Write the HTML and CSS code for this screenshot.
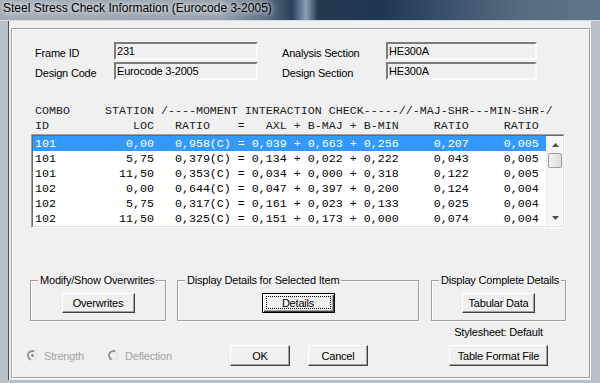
FILE: index.html
```html
<!DOCTYPE html>
<html lang="en">
<head>
    <meta charset="UTF-8">
    <title>Steel Stress Check Information (Eurocode 3-2005)</title>
    <link rel="stylesheet" href="styles.css">
</head>
<body>
    <div class="titlebar">Steel Stress Check Information (Eurocode 3-2005)</div>
    <div class="client">
        <div class="panel">
            <div class="fields">
                <div class="field-label">Frame ID</div>
                <div class="textbox short">231</div>
                <div class="field-label">Analysis Section</div>
                <div class="textbox">HE300A</div>

                <div class="field-label">Design Code</div>
                <div class="textbox short">Eurocode 3-2005</div>
                <div class="field-label">Design Section</div>
                <div class="textbox">HE300A</div>
            </div>

            <!-- column headers, same char grid as the list rows -->
            <div class="grid-head">COMBO     STATION /----MOMENT INTERACTION CHECK-----//-MAJ-SHR---MIN-SHR-/
ID            LOC   RATIO    =   AXL + B-MAJ + B-MIN     RATIO     RATIO</div>

            <div class="list">
                <div class="list-inner">
                    <div class="rows">
                        <div class="row selected">101          0,00   0,958(C) = 0,039 + 0,663 + 0,256     0,207     0,005</div>
                        <div class="row">101          5,75   0,379(C) = 0,134 + 0,022 + 0,222     0,043     0,005</div>
                        <div class="row">101         11,50   0,353(C) = 0,034 + 0,000 + 0,318     0,122     0,005</div>
                        <div class="row">102          0,00   0,644(C) = 0,047 + 0,397 + 0,200     0,124     0,004</div>
                        <div class="row">102          5,75   0,317(C) = 0,161 + 0,023 + 0,133     0,025     0,004</div>
                        <div class="row">102         11,50   0,325(C) = 0,151 + 0,173 + 0,000     0,074     0,004</div>
                    </div>
                    <div class="scrollbar">
                        <div class="sb-arrow">
                            <svg width="7" height="4" viewBox="0 0 7 4"><polygon points="0,4 7,4 3.5,0" fill="#505050"/></svg>
                        </div>
                        <div class="sb-thumb"></div>
                        <div class="sb-track"></div>
                        <div class="sb-arrow">
                            <svg width="7" height="4" viewBox="0 0 7 4"><polygon points="0,0 7,0 3.5,4" fill="#505050"/></svg>
                        </div>
                    </div>
                </div>
            </div>

            <div class="bottom">
                <div class="left-col">
                    <div class="groups">
                        <fieldset class="group g1">
                            <legend>Modify/Show Overwrites</legend>
                            <div class="group-body">
                                <button class="btn btn-small">Overwrites</button>
                            </div>
                        </fieldset>
                        <fieldset class="group g2">
                            <legend>Display Details for Selected Item</legend>
                            <div class="group-body">
                                <button class="btn btn-small btn-default"><span class="focus">Details</span></button>
                            </div>
                        </fieldset>
                    </div>
                    <div class="actions">
                        <div class="radios">
                            <div class="radio"><span class="radio-dot checked"></span>Strength</div>
                            <div class="radio"><span class="radio-dot"></span>Deflection</div>
                        </div>
                        <button class="btn btn-dialog">OK</button>
                        <button class="btn btn-dialog">Cancel</button>
                    </div>
                </div>
                <div class="right-col">
                    <fieldset class="group g3">
                        <legend>Display Complete Details</legend>
                        <div class="group-body">
                            <button class="btn btn-small">Tabular Data</button>
                        </div>
                    </fieldset>
                    <div class="stylesheet">Stylesheet: Default</div>
                    <button class="btn btn-wide">Table Format File</button>
                </div>
            </div>
        </div>
    </div>
</body>
</html>
```
FILE: styles.css
```css
* {
    box-sizing: border-box;
}
body {
    margin: 0;
    width: 600px;
    height: 383px;
    overflow: hidden;
    background-color: #b9bfc5;
    font-family: "Liberation Sans", Arial, sans-serif;
    font-size: 11px;
    letter-spacing: -0.2px;
    color: #000;
}

/* window chrome */
.titlebar {
    height: 21px;
    padding-left: 3px;
    line-height: 17px;
    font-size: 12px;
    letter-spacing: 0;
    color: #000;
    white-space: nowrap;
    text-shadow: 0 0 5px #fff, 0 0 9px rgba(255, 255, 255, 0.8);
    background: linear-gradient(90deg, #a3acb5 0, #97a2ad 220px, #5c6f83 265px, #2a415b 292px, #8aa0b5 306px, #22394f 318px, #1f3650 380px, #3c536c 450px, #566b80 520px, #60748a 600px);
    border-bottom: 1px solid #d9dde1;
}
.client {
    margin-left: 8px;
    width: 583px;
    height: 359px;
    border-left: 1px solid #4b4f54;
    background-color: #f0f0f0;
    padding: 7px 0 0 2px;
}
.panel {
    width: 580px;
    height: 351px;
    border: 1px solid;
    border-color: #a0a0a0 #fff #fff #a0a0a0;
    box-shadow: inset 1px 1px #fff, inset -1px -1px #a0a0a0;
}

/* frame info */
.fields {
    display: grid;
    grid-template-columns: 79px 168px 104px 151px;
    grid-auto-rows: 18px;
    row-gap: 2px;
    margin: 13px 0 0 23px;
}
.field-label {
    padding-top: 5px;
    line-height: 13px;
}
.textbox {
    width: 151px;
    border: 2px solid;
    border-color: #7c7c7c #fafafa #fafafa #7c7c7c;
    padding-left: 1px;
    line-height: 14px;
    background-color: #f0f0f0;
}
.textbox.short {
    width: 144px;
}

/* results list */
.grid-head,
.row {
    font-family: "Liberation Mono", "Courier New", monospace;
    font-size: 11.667px;
    letter-spacing: 0;
    white-space: pre;
}
.grid-head {
    margin: 22px 0 0 23px;
    padding-top: 2px;
    line-height: 15px;
    color: #1c1c1c;
}
.list {
    margin-left: 19px;
    width: 534px;
    border: 1px solid;
    border-color: #a0a0a0 #fff #fff #a0a0a0;
}
.list-inner {
    display: flex;
    border: 1px solid;
    border-color: #696969 #e3e3e3 #e3e3e3 #696969;
    background-color: #fff;
}
.rows {
    flex: 1;
}
.row {
    height: 15px;
    line-height: 15px;
    padding: 1px 0 0 2px;
    overflow: hidden;
}
.row.selected {
    background-color: #3399ff;
    color: #fff;
}
.scrollbar {
    width: 17px;
    display: flex;
    flex-direction: column;
    background-color: #f6f6f6;
    border-left: 1px solid #ececec;
}
.sb-arrow {
    height: 17px;
    display: flex;
    align-items: center;
    justify-content: center;
}
.sb-thumb {
    height: 15px;
    margin: 0 1px;
    border: 1px solid #9c9c9c;
    border-radius: 2px;
    background: linear-gradient(90deg, #f4f4f4, #dcdcdc);
}
.sb-track {
    flex: 1;
}

/* lower part: groups and buttons */
.bottom {
    display: flex;
    margin: 46px 0 0 18px;
}
.left-col {
    width: 389px;
}
.groups {
    display: flex;
    gap: 11px;
}
.group {
    margin: 0;
    padding: 6px 0 7px;
    border: 1px solid #a0a0a0;
    box-shadow: inset 1px 1px #fff, 1px 1px #fff;
    min-width: 0;
}
.group legend {
    margin-left: 7px;
    padding: 0 2px;
    line-height: 13px;
    white-space: nowrap;
}
.group-body {
    display: flex;
    justify-content: center;
}
.g1 {
    width: 136px;
}
.g2 {
    width: 242px;
}
.g3 {
    width: 135px;
}
.right-col {
    width: 135px;
    margin-left: 12px;
    display: flex;
    flex-direction: column;
    align-items: center;
}
.stylesheet {
    margin-top: 5px;
    line-height: 13px;
}

.btn {
    font-family: inherit;
    font-size: 11px;
    letter-spacing: -0.2px;
    color: #000;
    background-color: #f0f0f0;
    border: 1px solid;
    border-color: #fff #404040 #404040 #fff;
    box-shadow: inset -1px -1px #a0a0a0;
    padding: 0;
    margin: 0;
}
.btn-small {
    width: 73px;
    height: 20px;
}
.btn-dialog {
    width: 60px;
    height: 21px;
}
.btn-dialog + .btn-dialog {
    margin-left: 18px;
}
.btn-wide {
    width: 99px;
    height: 21px;
    margin-top: 6px;
}
.btn-default {
    border-color: #000;
    box-shadow: inset 1px 1px #fff, inset -1px -1px #404040, inset -2px -2px #a0a0a0;
    padding: 2px 3px 3px 3px;
}
.focus {
    display: block;
    height: 100%;
    border: 1px dotted #000;
    line-height: 12px;
}

.actions {
    display: flex;
    align-items: center;
    margin-top: 24px;
}
.radios {
    display: flex;
    width: 203px;
    margin-left: -3px;
}
.radio {
    display: flex;
    align-items: center;
    gap: 6px;
    color: #a3a3a3;
    width: 81px;
}
.radio-dot {
    width: 11px;
    height: 11px;
    border-radius: 50%;
    border: 2px solid;
    border-color: #8f8f8f #e6e6e6 #e6e6e6 #8f8f8f;
    transform: rotate(-20deg);
    display: flex;
    align-items: center;
    justify-content: center;
}
.radio-dot.checked::after {
    content: "";
    width: 3px;
    height: 3px;
    border-radius: 50%;
    background-color: #8a8a8a;
}
```
